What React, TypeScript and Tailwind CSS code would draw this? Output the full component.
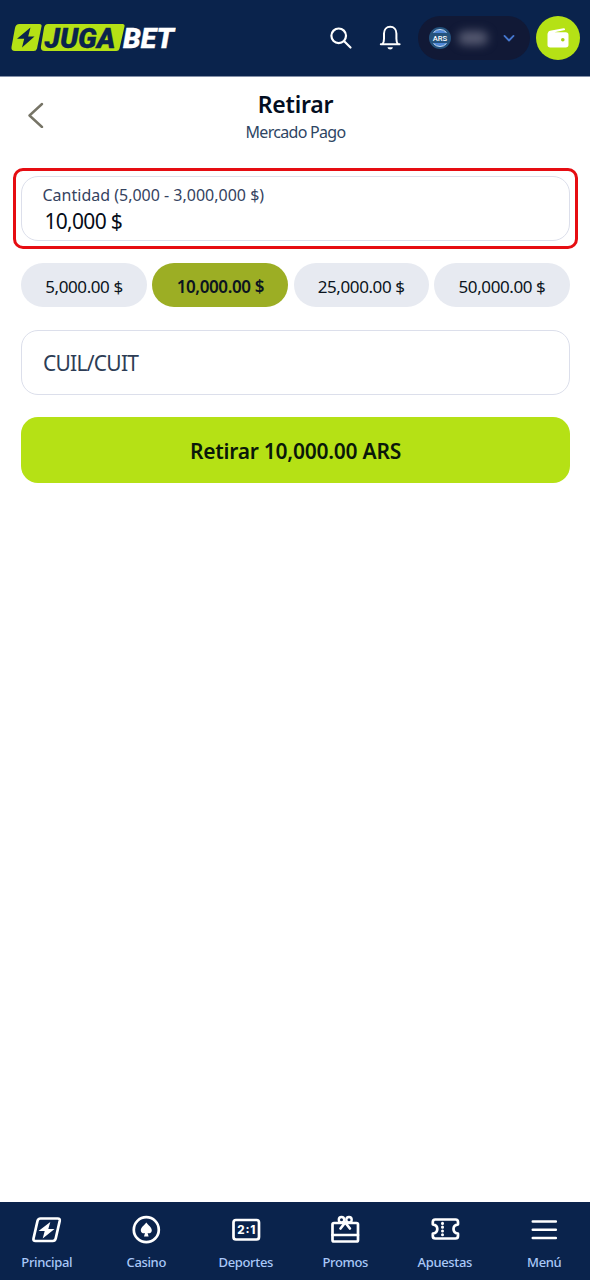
import type { ReactNode } from 'react';
import { clsx } from 'clsx';

const amounts = [
    { label: '5,000.00 $', width: 'w-[126px]' },
    { label: '10,000.00 $', width: 'w-[136px]', active: true },
    { label: '25,000.00 $', width: 'w-[135px]' },
    { label: '50,000.00 $', width: 'w-[136px]' },
];

const Logo = () => (
    <svg width="166" height="30" viewBox="10 23 166 30" aria-label="JugaBet">
        <path d="M19.5 24h20q2.500 0 2 2.500l-4.500 22q-.7 2.500-3.200 2.500h-18.800q-4 0-3.500-4l3.500-19q.8-4 4.500-4z" fill="#b5e115" />
        <path d="M48 24h74.500q2.500 0 2 2.500l-5 22q-.6 2.500-3.200 2.500h-71.300q-5 0-4-5l3-18q.7-4 4-4z" fill="#b5e115" />
        <path d="M30.500 27.500L17 38.700h7.200L22 47.500l12.500-11h-6.300z" fill="#0a234c" />
        <text x="44.500" y="47.500" textLength="71" lengthAdjust="spacingAndGlyphs" fontFamily="Roboto, sans-serif" fontWeight="900" fontStyle="italic" fontSize="27" fill="#0a234c" stroke="#0a234c" strokeWidth=".3">JUGA</text>
        <text x="123" y="47.500" textLength="51" lengthAdjust="spacingAndGlyphs" fontFamily="Roboto, sans-serif" fontWeight="900" fontStyle="italic" fontSize="27" fill="#fff" stroke="#fff" strokeWidth=".3">BET</text>
    </svg>
);

const ArsBadge = () => (
    <svg width="22" height="22" viewBox="0 0 22 22">
        <circle cx="11" cy="11" r="11" fill="#24527d" />
        <path d="M4.300 6a8.500 8.500 0 0 1 13.400 0M4.300 16a8.500 8.500 0 0 0 13.400 0" fill="#4d86d6" />
        <path d="M4.500 5.500a8.500 8.500 0 0 1 13 0M4.500 16.500a8.500 8.500 0 0 0 13 0" fill="none" stroke="#c8dcf5" strokeWidth="1" />
        <text x="11" y="13.600" textAnchor="middle" textLength="14.500" lengthAdjust="spacingAndGlyphs" fontFamily="Roboto, sans-serif" fontWeight="500" fontSize="7.500" fill="#fff">ARS</text>
    </svg>
);

const Header = () => (
    <header className="flex h-[77px] shrink-0 items-center border-b border-[#8490a8] bg-[#0a234c] pl-2.5 pr-2.5">
        <Logo />
        <div className="ml-auto flex items-center">
            <button className="mr-[25px]">
                <svg width="24" height="24" viewBox="0 0 24 24" fill="none" stroke="#fff" strokeWidth="2.200" strokeLinecap="round">
                    <circle cx="9.700" cy="9.800" r="7.300" />
                    <path d="M15.200 15.300l6.300 6.200" />
                </svg>
            </button>
            <button className="mr-4">
                <svg width="24" height="26" viewBox="0 0 24 26" fill="none" stroke="#fff" strokeWidth="2" strokeLinecap="round" strokeLinejoin="round">
                    <path d="M2.800 19.300h18.800M4.500 19c1.300-1.300 1.500-3 1.500-5.200v-5.300c0-4 2.600-6.700 6.200-6.700s6.200 2.700 6.200 6.700v5.300c0 2.200.2 3.900 1.500 5.200" />
                    <path d="M9.500 22.300h5.400c-.3 1.500-1.300 2.200-2.700 2.200s-2.400-.7-2.700-2.200z" fill="#fff" stroke="none" />
                </svg>
            </button>
            <button className="mr-1.5 flex h-11 w-[112px] items-center rounded-full bg-[#111936] pl-[11px]">
                <ArsBadge />
                <span className="ml-[7px] h-3.5 w-[30px] rounded-full bg-[#555970] blur-[5px]" />
                <svg className="ml-[15px]" width="12" height="8" viewBox="0 0 12 8" fill="none" stroke="#4577cf" strokeWidth="1.800" strokeLinecap="round" strokeLinejoin="round">
                    <path d="M1.500 1.900L6 6.500l4.500-4.600" />
                </svg>
            </button>
            <button className="flex size-11 items-center justify-center rounded-full bg-[#b5e115]">
                <svg width="22" height="20" viewBox="0 0 22 20">
                    <path d="M1.200 4.200Q1.500 3 3 2.700L16.500.2q1.500-.2 1.500 1v.9L7.500 4.300h11.300q2.700 0 2.700 2.700v9.800q0 2.700-2.700 2.700H3.200q-2.700 0-2.700-2.700V6.500q0-1.500.7-2.300z" fill="#fff" />
                    <circle cx="15.800" cy="11.700" r="1.800" fill="#a5cf13" />
                </svg>
            </button>
        </div>
    </header>
);

const NavItem = ({ label, children }: { label: string; children: ReactNode }) => (
    <a className="flex flex-col items-center">
        <svg width="32" height="32" viewBox="0 0 32 32" fill="none" stroke="#fff" strokeWidth="2.700" strokeLinecap="round" strokeLinejoin="round">
            {children}
        </svg>
        <span className="mt-[7px] text-[13px] leading-[18px] font-medium tracking-[-0.35px] text-[#a9c8f8]">{label}</span>
    </a>
);

const BottomNav = () => (
    <nav className="-mr-1 -ml-[3px] mt-auto grid h-[78px] shrink-0 grid-cols-6 bg-[#0a234c] pt-3">
        <NavItem label="Principal">
            <path d="M9.500 4.500h17.200q2.500 0 2 2.500l-4 17.500q-.6 2.500-3 2.500H4.500q-2.500 0-2-2.500L6.500 7q.6-2.500 3-2.500z" />
            <path d="M19.300 8L7.500 17h6.200l-2 7.500L23.500 15h-6.200z" fill="#fff" stroke="none" />
        </NavItem>
        <NavItem label="Casino">
            <circle cx="16.300" cy="15.700" r="12.500" />
            <path d="M16.300 8.500c2 2.800 5.500 4.700 5.500 8a3 3 0 0 1-4.200 2.600l1 3.400h-4.600l1-3.400a3 3 0 0 1-4.200-2.600c0-3.300 3.500-5.200 5.500-8z" fill="#fff" stroke="none" />
        </NavItem>
        <NavItem label="Deportes">
            <rect x="3.500" y="6" width="25.500" height="19.500" rx="2.500" />
            <text x="7.300" y="19.800" textLength="18" fontFamily="Inter, sans-serif" fontWeight="800" fontSize="11.500" fill="#fff" stroke="none">2:1</text>
        </NavItem>
        <NavItem label="Promos">
            <rect x="3.500" y="9" width="25.500" height="18.500" rx="1.500" />
            <path d="M3.500 21H29" />
            <circle cx="12.500" cy="5.700" r="2.700" strokeWidth="2.400" />
            <circle cx="20" cy="5.700" r="2.700" strokeWidth="2.400" />
            <path d="M16.200 8.500l-4.700 6M16.200 8.500l4.700 6" />
        </NavItem>
        <NavItem label="Apuestas">
            <path d="M3.800 8Q3.800 5.500 6.300 5.500h20.200Q29 5.500 29 8v2.300c-3 .5-4.500 2.500-4.500 4.700s1.500 4.200 4.500 4.700v2.300q0 2.500-2.500 2.500H6.300q-2.500 0-2.500-2.500v-2.300c3-.5 4.500-2.500 4.500-4.700s-1.500-4.200-4.500-4.700z" />
            <path d="M13.500 9.300v.1M13.500 13.100v.1M13.500 16.900v.1M13.500 20.700v.1" strokeWidth="3" />
        </NavItem>
        <NavItem label="Menú">
            <path d="M4.800 7.500h23M4.800 15.700h23M4.800 24h23" strokeWidth="2.600" />
        </NavItem>
    </nav>
);

export default function App() {
    return (
        <div className="flex h-[1280px] w-[590px] flex-col overflow-hidden bg-white font-['Noto_Sans',sans-serif]">
            <Header />
            <div className="grid grid-cols-[72px_1fr_72px] pt-[11px]">
                <button className="flex pt-3 pl-[27px]">
                    <svg width="17" height="28" viewBox="0 0 17 28" fill="none" stroke="#767466" strokeWidth="2.400" strokeLinecap="round" strokeLinejoin="round">
                        <path d="M15 4L2.500 15.500 15 27" />
                    </svg>
                </button>
                <div className="text-center">
                    <h1 className="pl-px text-[23px] leading-[32px] font-semibold tracking-[-0.2px] text-[#030d20]">Retirar</h1>
                    <p className="pl-px text-[16px] leading-[24px] tracking-[-0.7px] text-[#2e4563]">Mercado Pago</p>
                </div>
            </div>
            <main className="flex flex-col pt-6">
                <div className="mx-auto h-[81px] w-[565px] rounded-[10px] border-3 border-[#e60d12] p-[5px]">
                    <div className="h-[65px] w-[549px] rounded-[17px] border border-[#dcdfeb] pt-[6px] pl-[21px]">
                        <p className="text-[16px] leading-[24px] text-[#35435f]">Cantidad (5,000 - 3,000,000 $)</p>
                        <p className="pl-0.5 text-[21px] leading-[28px] tracking-[-0.7px] text-[#060c18]">10,000 $</p>
                    </div>
                </div>
                <div className="mt-[14px] flex justify-between pr-5 pl-[21px]">
                    {amounts.map((amount) => (
                        <button
                            key={amount.label}
                            className={clsx(
                                'h-11 rounded-full pt-1 text-[17px] text-[#0b1420]',
                                amount.width,
                                amount.active ? 'bg-[#9cae24] font-semibold tracking-[-0.4px]' : 'bg-[#e7eaf1] tracking-[-0.4px]',
                            )}
                        >
                            {amount.label}
                        </button>
                    ))}
                </div>
                <div className="mt-[23px] mr-5 ml-[21px] flex h-[65px] items-center rounded-[17px] border border-[#dcdfeb] pt-[3px] pl-[21px] text-[21px] tracking-[-0.75px] text-[#2d3d55]">
                    CUIL/CUIT
                </div>
                <button className="mt-[22px] mr-5 ml-[21px] h-[66px] rounded-[17px] bg-[#b5e115] pt-1 text-[21px] font-semibold tracking-[-0.25px] text-[#0a1809]">
                    Retirar 10,000.00 ARS
                </button>
            </main>
            <BottomNav />
        </div>
    );
}
